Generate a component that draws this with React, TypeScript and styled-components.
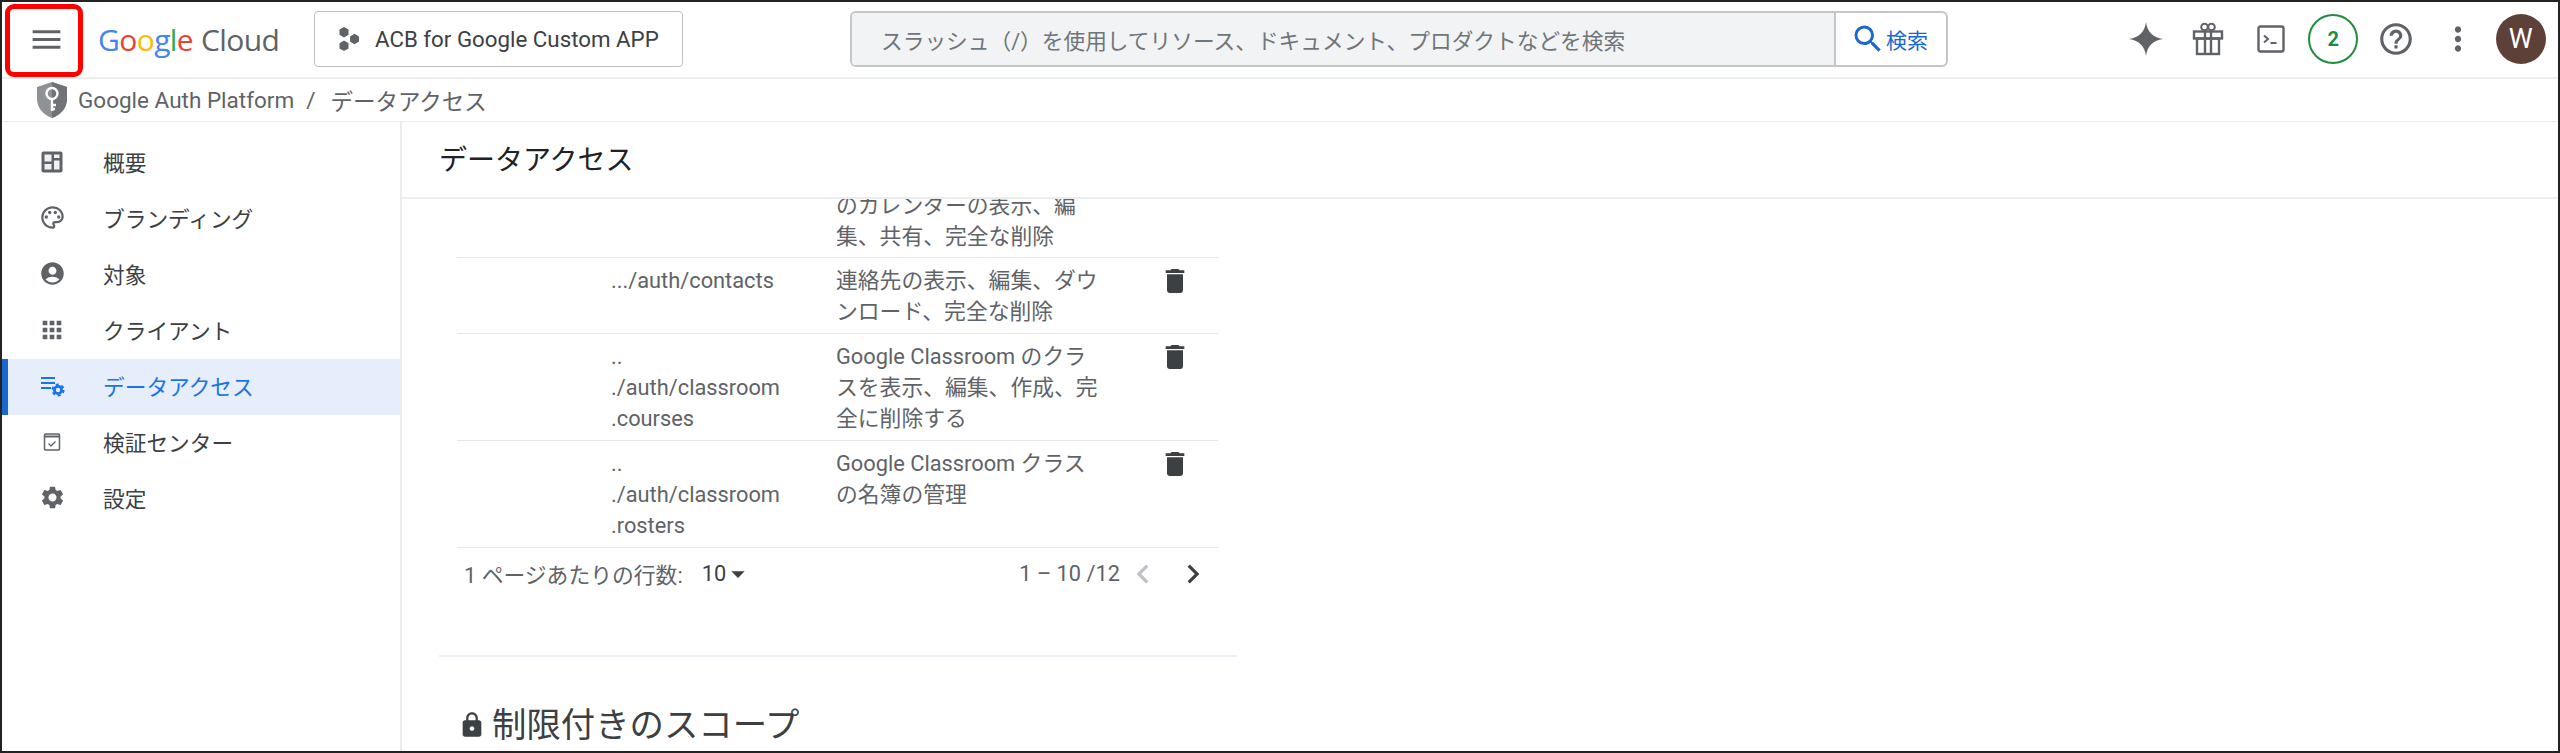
import { ReactNode } from 'react'
import styled, { createGlobalStyle } from 'styled-components'
import {
  MdAccountCircle,
  MdApps,
  MdArrowDropDown,
  MdChevronLeft,
  MdChevronRight,
  MdDelete,
  MdHelpOutline,
  MdLock,
  MdMenu,
  MdMoreVert,
  MdOutlinePalette,
  MdSearch,
  MdSettings,
} from 'react-icons/md'

const FONT = `Roboto, "Noto Sans CJK JP", sans-serif`

const GlobalStyle = createGlobalStyle`
  html, body {
    margin: 0;
    padding: 0;
    background: #fff;
    font-family: ${FONT};
  }
  * {
    box-sizing: border-box;
  }
`

type ScopeRow = {
  scope: string[]
  description: string[]
  clipped?: boolean
}

const scopeRows: ScopeRow[] = [
  {
    scope: [],
    description: ['のカレンダーの表示、編', '集、共有、完全な削除'],
    clipped: true,
  },
  {
    scope: ['.../auth/contacts'],
    description: ['連絡先の表示、編集、ダウ', 'ンロード、完全な削除'],
  },
  {
    scope: ['..', './auth/classroom', '.courses'],
    description: ['Google Classroom のクラ', 'スを表示、編集、作成、完', '全に削除する'],
  },
  {
    scope: ['..', './auth/classroom', '.rosters'],
    description: ['Google Classroom クラス', 'の名簿の管理'],
  },
]

const OverviewIcon = () => (
  <svg width="24" height="24" viewBox="0 0 24 24">
    <rect x="1.500" y="1.500" width="21" height="21" rx="2" fill="#5f6368" />
    <path
      fill="#eef0f1"
      d="M4.500 4.500h7v7h-7zm0 9.500h7v5.500h-7zm9.500-9.500h5.500v3.500H14zm0 6h5.500v9H14z"
    />
  </svg>
)

const DataAccessIcon = () => (
  <svg width="26" height="26" viewBox="0 0 26 26" fill="none" stroke="#1a73e8">
    <path d="M2 5h14M2 10h14M2 15h10" strokeWidth="2" />
    <circle cx="19" cy="17" r="3.600" strokeWidth="2.800" />
    <circle cx="19" cy="17" r="5.600" strokeWidth="2" strokeDasharray="3 2.860" />
  </svg>
)

const VerifyIcon = () => (
  <svg width="24" height="24" viewBox="0 0 24 24" fill="none" stroke="#5f6368">
    <rect x="4.500" y="4" width="15" height="16" rx="1" strokeWidth="1.500" />
    <path d="M4.500 6.500h15" strokeWidth="2" />
    <path d="M8.500 13.500l2.500 2.500 4.500-4.500" strokeWidth="1.300" />
  </svg>
)

const SparkIcon = () => (
  <svg width="36" height="36" viewBox="0 0 36 36" fill="#5f6368">
    <path d="M18 1c1.300 9.500 6.500 15.500 17 17-10.500 1.500-15.700 7.500-17 17-1.300-9.500-6.500-15.500-17-17C11.500 16.500 16.700 10.500 18 1z" />
  </svg>
)

const GiftIcon = () => (
  <svg width="34" height="34" viewBox="0 0 34 34" fill="none" stroke="#5f6368" strokeWidth="2.400">
    <circle cx="13.500" cy="5" r="3.300" strokeWidth="2" />
    <circle cx="20.500" cy="5" r="3.300" strokeWidth="2" />
    <rect x="3" y="9.500" width="28" height="7" />
    <rect x="6" y="16.500" width="22" height="15.500" />
    <path d="M14 9.500V32M20 9.500V32" />
  </svg>
)

const TerminalIcon = () => (
  <svg width="30" height="30" viewBox="0 0 30 30" fill="none" stroke="#5f6368">
    <rect x="2.500" y="2.500" width="25" height="25" rx="2" strokeWidth="2.400" />
    <path d="M8 11.500l4 3.500-4 3.500" strokeWidth="2" />
    <path d="M14.500 19h6" strokeWidth="2" />
  </svg>
)

const ProjectIcon = () => (
  <svg width="24" height="26" viewBox="0 0 24 26" fill="#5f6368">
    <path d="M7 1l4.500 2.600v5.200L7 11.400 2.500 8.800V3.600z" />
    <path d="M7 14.600l4.500 2.600v5.200L7 25l-4.500-2.600v-5.200z" />
    <path d="M17.500 7.800l4.500 2.600v5.200l-4.500 2.600-4.500-2.600v-5.200z" />
  </svg>
)

const ShieldIcon = () => (
  <svg width="30" height="36" viewBox="0 0 30 36">
    <path d="M15 0l15 5v12c0 9-6.500 16-15 19C6.500 33 0 26 0 17V5z" fill="#8e9195" />
    <path d="M15 0l15 5v12c0 9-6.500 16-15 19z" fill="#6f7276" />
    <circle cx="15" cy="11.500" r="5.500" fill="none" stroke="#fff" strokeWidth="2.400" />
    <path d="M15 17v12M15 23h4M15 27h3" fill="none" stroke="#fff" strokeWidth="2.400" />
  </svg>
)

const navItems: { label: string; icon: ReactNode; active?: boolean }[] = [
  { label: '概要', icon: <OverviewIcon /> },
  { label: 'ブランディング', icon: <MdOutlinePalette size={27} /> },
  { label: '対象', icon: <MdAccountCircle size={27} /> },
  { label: 'クライアント', icon: <MdApps size={28} /> },
  { label: 'データアクセス', icon: <DataAccessIcon />, active: true },
  { label: '検証センター', icon: <VerifyIcon /> },
  { label: '設定', icon: <MdSettings size={27} /> },
]

const App = () => {
  return (
    <Frame>
      <GlobalStyle />
      <HighlightBox />
      <TopBar>
        <MenuButton>
          <MdMenu size={37} />
        </MenuButton>
        <Logo>
          <Letter color="#4285f4">G</Letter>
          <Letter color="#ea4335">o</Letter>
          <Letter color="#fbbc04">o</Letter>
          <Letter color="#4285f4">g</Letter>
          <Letter color="#34a853">l</Letter>
          <Letter color="#ea4335">e</Letter>
          <LogoCloud>Cloud</LogoCloud>
        </Logo>
        <ProjectButton>
          <ProjectIcon />
          ACB for Google Custom APP
        </ProjectButton>
        <SearchBox>
          <SearchInput>スラッシュ（/）を使用してリソース、ドキュメント、プロダクトなどを検索</SearchInput>
          <SearchButton>
            <MdSearch size={36} />
            検索
          </SearchButton>
        </SearchBox>
        <Actions>
          <ActionSlot>
            <SparkIcon />
          </ActionSlot>
          <ActionSlot>
            <GiftIcon />
          </ActionSlot>
          <ActionSlot>
            <TerminalIcon />
          </ActionSlot>
          <ActionSlot>
            <Badge>2</Badge>
          </ActionSlot>
          <ActionSlot>
            <MdHelpOutline size={38} />
          </ActionSlot>
          <ActionSlot>
            <MdMoreVert size={38} />
          </ActionSlot>
          <ActionSlot>
            <Avatar>W</Avatar>
          </ActionSlot>
        </Actions>
      </TopBar>

      <Breadcrumb>
        <ShieldIcon />
        <CrumbText>Google Auth Platform</CrumbText>
        <CrumbSlash>/</CrumbSlash>
        <CrumbText>データアクセス</CrumbText>
      </Breadcrumb>

      <Body>
        <Sidebar>
          {navItems.map((item) => (
            <NavItem key={item.label} $active={item.active}>
              <NavIcon>{item.icon}</NavIcon>
              {item.label}
            </NavItem>
          ))}
        </Sidebar>

        <Main>
          <PageHeader>データアクセス</PageHeader>
          <Scroller>
            <Section>
              <ScopeTable>
                {scopeRows.map((row, i) => (
                  <Row key={i} $clipped={row.clipped}>
                    <span />
                    <Cell>
                      {row.scope.map((line) => (
                        <Line key={line}>{line}</Line>
                      ))}
                    </Cell>
                    <Cell>
                      {row.description.map((line) => (
                        <Line key={line}>{line}</Line>
                      ))}
                    </Cell>
                    <TrashCell>{!row.clipped && <MdDelete size={32} />}</TrashCell>
                  </Row>
                ))}
                <Pagination>
                  <span>1 ページあたりの行数:</span>
                  <PageSize>
                    10
                    <MdArrowDropDown size={32} />
                  </PageSize>
                  <PageRange>1 – 10 /12</PageRange>
                  <PageArrow $disabled>
                    <MdChevronLeft size={38} />
                  </PageArrow>
                  <PageArrow>
                    <MdChevronRight size={38} />
                  </PageArrow>
                </Pagination>
              </ScopeTable>
              <Divider />
              <SectionTitle>
                <MdLock size={28} />
                制限付きのスコープ
              </SectionTitle>
            </Section>
          </Scroller>
        </Main>
      </Body>
    </Frame>
  )
}

const Frame = styled.div`
  position: relative;
  width: 2560px;
  height: 753px;
  border: 2px solid #222;
  overflow: hidden;
  display: flex;
  flex-direction: column;
  background: #fff;
  color: #5f6368;
`

const HighlightBox = styled.div`
  position: absolute;
  left: 3px;
  top: 2px;
  width: 78px;
  height: 73px;
  border: 5px solid #f00;
  border-radius: 9px;
`

const TopBar = styled.header`
  height: 77px;
  flex: none;
  display: flex;
  align-items: center;
  padding: 0 0 1px 30px;
  border-bottom: 2px solid #eceded;
  svg {
    flex: none;
  }
`

const MenuButton = styled.div`
  width: 28px;
  height: 38px;
  display: flex;
  align-items: center;
  justify-content: center;
  color: #5f6368;
`

const Logo = styled.div`
  margin-left: 38px;
  width: 216px;
  display: flex;
  align-items: baseline;
  font-family: "Open Sans", sans-serif;
  font-size: 30px;
  letter-spacing: -0.6px;
`

const Letter = styled.span<{ color: string }>`
  color: ${({ color }) => color};
`

const LogoCloud = styled.span`
  margin-left: 8px;
  color: #5f6368;
`

const ProjectButton = styled.div`
  width: 369px;
  height: 56px;
  display: flex;
  align-items: center;
  gap: 14px;
  padding-left: 22px;
  border: 1.5px solid #bdc1c6;
  border-radius: 4px;
  color: #3c4043;
  font-size: 22.300px;
  font-weight: 400;
`

const SearchBox = styled.div`
  margin-left: 167px;
  width: 1098px;
  height: 56px;
  display: flex;
  border: 2px solid #c4c7c9;
  border-radius: 6px;
  overflow: hidden;
`

const SearchInput = styled.div`
  flex: 1;
  display: flex;
  align-items: center;
  padding-left: 29px;
  background: #f2f3f5;
  border-right: 2px solid #c4c7c9;
  font-size: 21.700px;
  color: #70757a;
`

const SearchButton = styled.div`
  width: 110px;
  display: flex;
  align-items: center;
  padding-left: 14px;
  color: #1a67d2;
  font-size: 21px;
`

const Actions = styled.div`
  margin-left: auto;
  display: flex;
  margin-right: 6px;
`

const ActionSlot = styled.div`
  width: 62.500px;
  display: flex;
  align-items: center;
  justify-content: center;
  color: #5f6368;
`

const Badge = styled.div`
  width: 50px;
  height: 50px;
  border: 2.500px solid #1e8e3e;
  border-radius: 50%;
  display: flex;
  align-items: center;
  justify-content: center;
  color: #1e8e3e;
  font-size: 20px;
  font-weight: 700;
`

const Avatar = styled.div`
  width: 50px;
  height: 50px;
  border-radius: 50%;
  background: #5d4037;
  color: #fff;
  display: flex;
  align-items: center;
  justify-content: center;
  font-size: 27px;
`

const Breadcrumb = styled.nav`
  height: 43px;
  flex: none;
  display: flex;
  align-items: center;
  padding: 0 0 1px 35px;
  border-bottom: 1px solid #eceded;
  font-size: 22.500px;
  color: #5f6368;
`

const CrumbText = styled.span`
  margin-left: 11px;
  &:last-child {
    margin-left: 0;
  }
`

const CrumbSlash = styled.span`
  margin: 0 15px 0 12px;
`

const Body = styled.div`
  flex: 1;
  min-height: 0;
  display: flex;
`

const Sidebar = styled.aside`
  width: 400px;
  flex: none;
  padding-top: 13px;
  border-right: 2px solid #eceded;
`

const NavItem = styled.div<{ $active?: boolean }>`
  height: 56px;
  display: flex;
  align-items: center;
  padding: 0 0 3px 36px;
  font-size: 21.700px;
  color: ${({ $active }) => ($active ? '#1a73e8' : '#3c4043')};
  background: ${({ $active }) => ($active ? '#e6eefb' : 'transparent')};
  box-shadow: ${({ $active }) => ($active ? 'inset 6px 0 0 #1a67d2' : 'none')};
`

const NavIcon = styled.span`
  width: 28px;
  margin-right: 37px;
  display: flex;
  justify-content: center;
  color: #5f6368;
`

const Main = styled.main`
  flex: 1;
  min-width: 0;
  display: flex;
  flex-direction: column;
`

const PageHeader = styled.h1`
  margin: 0;
  height: 77px;
  flex: none;
  display: flex;
  align-items: center;
  padding: 0 0 3px 37px;
  border-bottom: 2px solid #eceded;
  font-size: 28px;
  font-weight: 400;
  color: #202124;
`

const Scroller = styled.div`
  flex: 1;
  min-height: 0;
  overflow: hidden;
  padding-left: 37px;
`

const Section = styled.section`
  width: 798px;
`

const ScopeTable = styled.div`
  margin: -9px 0 0 18px;
  width: 761px;
`

const Row = styled.div<{ $clipped?: boolean }>`
  display: grid;
  grid-template-columns: 154px 225px 319px 40px;
  padding: ${({ $clipped }) => ($clipped ? '0 0 5px' : '7px 0 6px')};
  border-bottom: 1px solid #e3e8ee;
  font-size: 21.800px;
  line-height: 31px;
  color: #5f6368;
`

const Cell = styled.div``

const Line = styled.div`
  white-space: nowrap;
`

const TrashCell = styled.div`
  display: flex;
  justify-content: center;
  align-items: flex-start;
  color: #3c4043;
`

const Pagination = styled.div`
  height: 51px;
  display: flex;
  align-items: center;
  padding: 0 0 0 7px;
  font-size: 21.800px;
`

const PageSize = styled.span`
  margin-left: 19px;
  display: flex;
  align-items: center;
  color: #3c4043;
  svg {
    margin-left: -4px;
  }
`

const PageRange = styled.span`
  margin-left: auto;
  margin-right: -2px;
`

const PageArrow = styled.span<{ $disabled?: boolean }>`
  width: 50px;
  display: flex;
  justify-content: center;
  color: ${({ $disabled }) => ($disabled ? '#bdc1c6' : '#3c4043')};
`

const Divider = styled.hr`
  margin: 56px 0 0;
  border: 0;
  border-top: 2px solid #eef1f5;
`

const SectionTitle = styled.h2`
  margin: 46px 0 0 19px;
  display: flex;
  align-items: center;
  gap: 6px;
  font-size: 34.400px;
  line-height: 44px;
  font-weight: 400;
  color: #3c4043;
  svg {
    color: #3c4043;
    flex: none;
  }
`

export default App
